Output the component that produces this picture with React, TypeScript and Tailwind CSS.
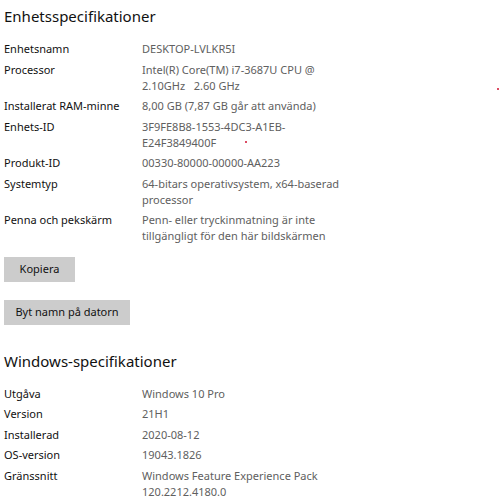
import React from "react";

type Row = { label: string; value: React.ReactNode };

const device: Row[] = [
  { label: "Enhetsnamn", value: "DESKTOP-LVLKR5I" },
  {
    label: "Processor",
    value: (
      <>
        Intel(R) Core(TM) i7-3687U CPU @<br />
        2.10GHz&nbsp;&nbsp;&nbsp;2.60 GHz
      </>
    ),
  },
  { label: "Installerat RAM-minne", value: "8,00 GB (7,87 GB går att använda)" },
  {
    label: "Enhets-ID",
    value: (
      <>
        3F9FE8B8-1553-4DC3-A1EB-
        <br />
        E24F3849400F
      </>
    ),
  },
  { label: "Produkt-ID", value: "00330-80000-00000-AA223" },
  {
    label: "Systemtyp",
    value: (
      <>
        64-bitars operativsystem, x64-baserad
        <br />
        processor
      </>
    ),
  },
  {
    label: "Penna och pekskärm",
    value: (
      <>
        Penn- eller tryckinmatning är inte
        <br />
        tillgängligt för den här bildskärmen
      </>
    ),
  },
];

const windows: Row[] = [
  { label: "Utgåva", value: "Windows 10 Pro" },
  { label: "Version", value: "21H1" },
  { label: "Installerad", value: "2020-08-12" },
  { label: "OS-version", value: "19043.1826" },
  {
    label: "Gränssnitt",
    value: (
      <>
        Windows Feature Experience Pack
        <br />
        120.2212.4180.0
      </>
    ),
  },
];

function Rows({ rows }: { rows: Row[] }) {
  return (
    <div className="flex flex-col gap-[4.5px]">
      {rows.map((r) => (
        <div key={r.label} className="grid grid-cols-[138px_1fr] text-[11px] leading-[16px]">
          <div className="text-[#111]">{r.label}</div>
          <div className="text-[#606060] whitespace-nowrap">{r.value}</div>
        </div>
      ))}
    </div>
  );
}

export default function App() {
  return (
    <div
      className="relative w-[500px] h-[500px] overflow-hidden bg-white pl-[4px] pt-[4px]"
      style={{ fontFamily: '"Segoe UI", "Noto Sans", sans-serif' }}
    >
      <div className="text-[15px] leading-[24px] text-[#111]">Enhetsspecifikationer</div>
      <div className="mt-[13px]">
        <Rows rows={device} />
      </div>
      <div className="mt-[13px] flex flex-col items-start gap-[18px]">
        <button className="h-[25px] w-[71px] bg-[#cccccc] text-[11px] text-[#111]">Kopiera</button>
        <button className="h-[25px] w-[126px] bg-[#cccccc] text-[11px] text-[#111]">Byt namn på datorn</button>
      </div>
      <div className="mt-[24px] text-[15px] leading-[24px] text-[#111]">Windows-specifikationer</div>
      <div className="mt-[12.5px]">
        <Rows rows={windows} />
      </div>
      <div className="absolute left-[245px] top-[141px] h-[2px] w-[2px] rounded-full bg-[#d01030]" />
      <div className="absolute left-[497px] top-[88px] h-[2px] w-[2px] rounded-full bg-[#d01030]" />
    </div>
  );
}
